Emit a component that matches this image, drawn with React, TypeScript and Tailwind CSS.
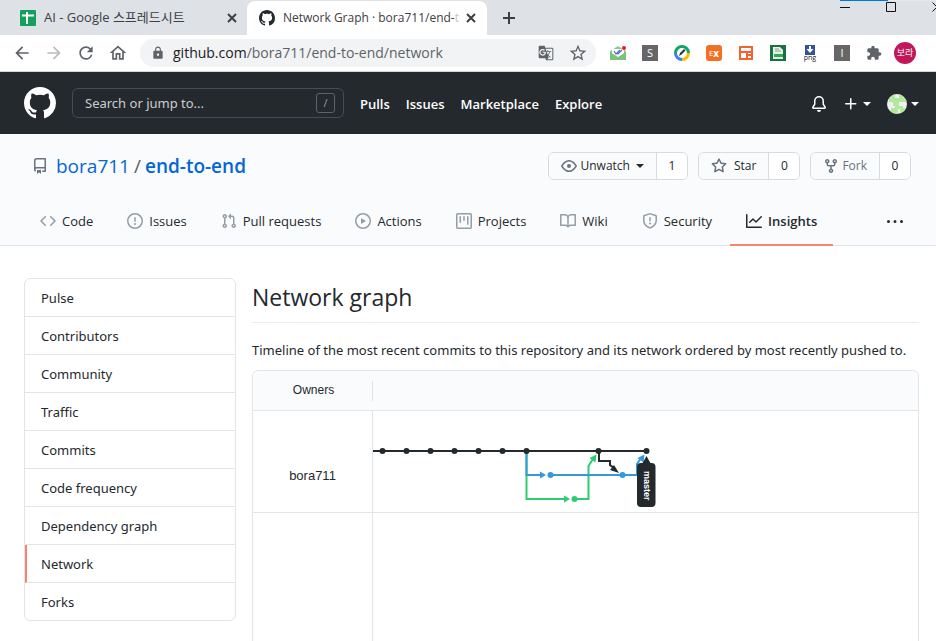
import React from "react";
import {
  MdArrowBack,
  MdArrowForward,
  MdRefresh,
  MdLock,
  MdStarBorder,
  MdGTranslate,
  MdExtension,
  MdOutlineHome,
} from "react-icons/md";

const icons = {
  mark: "M8 0C3.58 0 0 3.58 0 8c0 3.54 2.29 6.53 5.47 7.59.4.07.55-.17.55-.38 0-.19-.01-.82-.01-1.49-2.01.37-2.53-.49-2.69-.94-.09-.23-.48-.94-.82-1.13-.28-.15-.68-.52-.01-.53.63-.01 1.08.58 1.23.82.72 1.21 1.87.87 2.33.66.07-.52.28-.87.51-1.07-1.78-.2-3.64-.89-3.64-3.95 0-.87.31-1.59.82-2.15-.08-.2-.36-1.02.08-2.12 0 0 .67-.21 2.2.82.64-.18 1.32-.27 2-.27.68 0 1.36.09 2 .27 1.53-1.04 2.2-.82 2.2-.82.44 1.1.16 1.92.08 2.12.51.56.82 1.27.82 2.15 0 3.07-1.87 3.75-3.65 3.95.29.25.54.73.54 1.48 0 1.07-.01 1.93-.01 2.2 0 .21.15.46.55.38A8.013 8.013 0 0016 8c0-4.42-3.58-8-8-8z",
  repo: "M2 2.5A2.5 2.5 0 014.5 0h8.75a.75.75 0 01.75.75v12.5a.75.75 0 01-.75.75h-2.5a.75.75 0 110-1.5h1.75v-2h-8a1 1 0 00-.714 1.7.75.75 0 01-1.072 1.05A2.495 2.495 0 012 11.5v-9zm10.5-1V9h-8c-.356 0-.694.074-1 .208V2.5a1 1 0 011-1h8zM5 12.25v3.25a.25.25 0 00.4.2l1.45-1.087a.25.25 0 01.3 0L8.6 15.7a.25.25 0 00.4-.2v-3.25a.25.25 0 00-.25-.25h-3.5a.25.25 0 00-.25.25z",
  code: "M4.72 3.22a.75.75 0 011.06 1.06L2.06 8l3.72 3.72a.75.75 0 11-1.06 1.06L.47 8.53a.75.75 0 010-1.06l4.25-4.25zm6.56 0a.75.75 0 10-1.06 1.06L13.94 8l-3.72 3.72a.75.75 0 101.06 1.06l4.25-4.25a.75.75 0 000-1.06l-4.25-4.25z",
  issue: "M8 1.5a6.5 6.5 0 100 13 6.5 6.5 0 000-13zM0 8a8 8 0 1116 0A8 8 0 010 8zm9 3a1 1 0 11-2 0 1 1 0 012 0zm-.25-6.25a.75.75 0 00-1.5 0v3.5a.75.75 0 001.5 0v-3.5z",
  pull: "M7.177 3.073L9.573.677A.25.25 0 0110 .854v4.792a.25.25 0 01-.427.177L7.177 3.427a.25.25 0 010-.354zM3.75 2.5a.75.75 0 100 1.5.75.75 0 000-1.5zm-2.25.75a2.25 2.25 0 113 2.122v5.256a2.251 2.251 0 11-1.5 0V5.372A2.25 2.25 0 011.5 3.25zM11 2.5h-1V4h1a1 1 0 011 1v5.628a2.251 2.251 0 101.5 0V5A2.5 2.5 0 0011 2.5zm1 10.25a.75.75 0 111.5 0 .75.75 0 01-1.5 0zM3.75 12a.75.75 0 100 1.5.75.75 0 000-1.5z",
  play: "M1.5 8a6.5 6.5 0 1113 0 6.5 6.5 0 01-13 0zM8 0a8 8 0 100 16A8 8 0 008 0zM6.379 5.227A.25.25 0 006 5.442v5.117a.25.25 0 00.379.214l4.264-2.559a.25.25 0 000-.428L6.379 5.227z",
  project: "M1.75 0A1.75 1.75 0 000 1.75v12.5C0 15.216.784 16 1.75 16h12.5A1.75 1.75 0 0016 14.25V1.75A1.75 1.75 0 0014.25 0H1.75zM1.5 1.75a.25.25 0 01.25-.25h12.5a.25.25 0 01.25.25v12.5a.25.25 0 01-.25.25H1.75a.25.25 0 01-.25-.25V1.75zM11.75 3a.75.75 0 00-.75.75v7.5a.75.75 0 001.5 0v-7.5a.75.75 0 00-.75-.75zm-8.25.75a.75.75 0 011.5 0v5.5a.75.75 0 01-1.5 0v-5.5zM8 3a.75.75 0 00-.75.75v3.5a.75.75 0 001.5 0v-3.5A.75.75 0 008 3z",
  book: "M0 1.75A.75.75 0 01.75 1h4.253c1.227 0 2.317.59 3 1.501A3.744 3.744 0 0111.006 1h4.245a.75.75 0 01.75.75v10.5a.75.75 0 01-.75.75h-4.507a2.25 2.25 0 00-1.591.659l-.622.621a.75.75 0 01-1.06 0l-.622-.621A2.25 2.25 0 005.258 13H.75a.75.75 0 01-.75-.75V1.75zm8.755 3a2.25 2.25 0 012.25-2.25H14.5v9h-3.757c-.71 0-1.4.201-1.992.572l.004-7.322zm-1.504 7.324l.004-5.073-.002-2.253A2.25 2.25 0 005.003 2.5H1.5v9h3.757a3.75 3.75 0 011.994.574z",
  shield: "M7.467.133a1.75 1.75 0 011.066 0l5.25 1.68A1.75 1.75 0 0115 3.48V7c0 1.566-.32 3.182-1.303 4.682-.983 1.498-2.585 2.813-5.032 3.855a1.7 1.7 0 01-1.33 0c-2.447-1.042-4.049-2.357-5.032-3.855C1.32 10.182 1 8.566 1 7V3.48a1.75 1.75 0 011.217-1.667l5.25-1.68zm.61 1.429a.25.25 0 00-.153 0l-5.25 1.68a.25.25 0 00-.174.238V7c0 1.358.275 2.666 1.057 3.86.784 1.194 2.121 2.34 4.366 3.297a.2.2 0 00.154 0c2.245-.956 3.582-2.104 4.366-3.298C13.225 9.666 13.5 8.36 13.5 7V3.48a.25.25 0 00-.174-.237l-5.25-1.68zM9 10.5a1 1 0 11-2 0 1 1 0 012 0zm-.25-5.75a.75.75 0 10-1.5 0v3a.75.75 0 001.5 0v-3z",
  graph: "M1.5 1.75a.75.75 0 00-1.5 0v12.5c0 .414.336.75.75.75h14.5a.75.75 0 000-1.5H1.5V1.75zm14.28 2.53a.75.75 0 00-1.06-1.06L10 7.94 7.53 5.47a.75.75 0 00-1.06 0L3.22 8.72a.75.75 0 001.06 1.06L7 7.06l2.47 2.47a.75.75 0 001.06 0l5.25-5.25z",
  kebab: "M8 9a1.5 1.5 0 100-3 1.5 1.5 0 000 3zM1.5 9a1.5 1.5 0 100-3 1.5 1.5 0 000 3zm13 0a1.5 1.5 0 100-3 1.5 1.5 0 000 3z",
  eye: "M1.679 7.932c.412-.621 1.242-1.75 2.366-2.717C5.175 4.242 6.527 3.5 8 3.5c1.473 0 2.824.742 3.955 1.715 1.124.967 1.954 2.096 2.366 2.717a.119.119 0 010 .136c-.412.621-1.242 1.75-2.366 2.717C10.825 11.758 9.473 12.5 8 12.5c-1.473 0-2.824-.742-3.955-1.715C2.92 9.818 2.09 8.69 1.679 8.068a.119.119 0 010-.136zM8 2c-1.981 0-3.67.992-4.933 2.078C1.797 5.169.88 6.423.43 7.1a1.619 1.619 0 000 1.798c.45.678 1.367 1.932 2.637 3.024C4.329 13.008 6.019 14 8 14c1.981 0 3.67-.992 4.933-2.078 1.27-1.091 2.187-2.345 2.637-3.023a1.619 1.619 0 000-1.798c-.45-.678-1.367-1.932-2.637-3.023C11.671 2.992 9.981 2 8 2zm0 8a2 2 0 100-4 2 2 0 000 4z",
  star: "M8 .25a.75.75 0 01.673.418l1.882 3.815 4.21.612a.75.75 0 01.416 1.279l-3.046 2.97.719 4.192a.75.75 0 01-1.088.791L8 12.347l-3.766 1.98a.75.75 0 01-1.088-.79l.72-4.194L.818 6.374a.75.75 0 01.416-1.28l4.21-.611L7.327.668A.75.75 0 018 .25zm0 2.445L6.615 5.5a.75.75 0 01-.564.41l-3.097.45 2.24 2.184a.75.75 0 01.216.664l-.528 3.084 2.769-1.456a.75.75 0 01.698 0l2.77 1.456-.53-3.084a.75.75 0 01.216-.664l2.24-2.183-3.096-.45a.75.75 0 01-.564-.41L8 2.694v.001z",
  fork: "M5 3.25a.75.75 0 11-1.5 0 .75.75 0 011.5 0zm0 2.122a2.25 2.25 0 10-1.5 0v.878A2.25 2.25 0 005.75 8.5h1.5v2.128a2.251 2.251 0 101.5 0V8.5h1.5a2.25 2.25 0 002.25-2.25v-.878a2.25 2.25 0 10-1.5 0v.878a.75.75 0 01-.75.75h-4.5A.75.75 0 015 6.25v-.878zm3.75 7.378a.75.75 0 11-1.5 0 .75.75 0 011.5 0zm3-8.75a.75.75 0 100-1.5.75.75 0 000 1.5z",
  bell: "M8 16a2 2 0 001.985-1.75c.017-.137-.097-.25-.235-.25h-3.5c-.138 0-.252.113-.235.25A2 2 0 008 16zM8 1.5A3.5 3.5 0 004.5 5v2.947c0 .346-.102.683-.294.97l-1.703 2.556a.018.018 0 00-.003.01l.001.006c0 .002.002.004.004.006a.017.017 0 00.006.004l.007.001h10.964l.007-.001a.016.016 0 00.006-.004.016.016 0 00.004-.006l.001-.007a.017.017 0 00-.003-.01l-1.703-2.554a1.75 1.75 0 01-.294-.97V5A3.5 3.5 0 008 1.5zM3 5a5 5 0 0110 0v2.947c0 .05.015.098.042.139l1.703 2.555A1.518 1.518 0 0113.482 13H2.518a1.518 1.518 0 01-1.263-2.36l1.703-2.554A.25.25 0 003 7.947V5z",
  plus: "M7.75 2a.75.75 0 01.75.75V7h4.25a.75.75 0 110 1.5H8.5v4.25a.75.75 0 11-1.5 0V8.5H2.75a.75.75 0 010-1.5H7V2.75A.75.75 0 017.75 2z",
};

type IconName = keyof typeof icons;

function Octicon({ name, className = "size-4" }: { name: IconName; className?: string }) {
  return (
    <svg viewBox="0 0 16 16" className={`shrink-0 fill-current ${className}`} aria-hidden="true">
      <path fillRule="evenodd" d={icons[name]} />
    </svg>
  );
}

function Caret() {
  return (
    <svg viewBox="0 0 8 4" className="h-1 w-2 shrink-0 fill-current" aria-hidden="true">
      <path d="M0 0h8L4 4z" />
    </svg>
  );
}

function Cross() {
  return (
    <svg viewBox="0 0 10 10" className="size-[10px] shrink-0" aria-hidden="true">
      <path d="M1 1l8 8M9 1L1 9" stroke="#3c4043" strokeWidth="2" />
    </svg>
  );
}

function TabStrip() {
  return (
    <div className="flex h-[35px] bg-[#dee1e6] text-xs text-[#3c4043]">
      <div className="flex w-[247px] shrink-0 items-center pr-[10px] pl-5">
        <svg viewBox="0 0 16 16" className="mr-2 size-4 shrink-0" aria-hidden="true">
          <rect width="16" height="16" rx="1" fill="#12a05c" />
          <path d="M2 5.5h12M7 2v12" stroke="#fff" strokeWidth="2" />
        </svg>
        <span className="flex-1 truncate text-[13px]">AI - Google 스프레드시트</span>
        <button type="button" aria-label="Close tab"><Cross /></button>
      </div>
      <div className="mt-px flex w-[240px] shrink-0 items-center rounded-t-lg bg-white pr-[11px] pl-3">
        <Octicon name="mark" className="mr-2 size-4 text-[#24292e]" />
        <span className="flex-1 whitespace-nowrap">
          Network Graph · bora711/end-<span className="text-[#c4c6c8]">t</span>
        </span>
        <button type="button" aria-label="Close tab"><Cross /></button>
      </div>
      <button type="button" aria-label="New tab" className="ml-4 flex items-center">
        <svg viewBox="0 0 12 12" className="size-3" aria-hidden="true">
          <path d="M6 0v12M0 6h12" stroke="#3c4043" strokeWidth="2" />
        </svg>
      </button>
      <svg viewBox="0 0 96 14" className="ml-auto h-[14px] w-24 shrink-0" aria-hidden="true">
        <path d="M48 0h48v1H48z" fill="#e8e6e6" />
        <path d="M0 0h48v1H0z" fill="#0078d7" />
        <path d="M0 7.500h10M46.500 2.500h9v9h-9zM92.500 2.500l9 9M101.500 2.500l-9 9" fill="none" stroke="#111" />
      </svg>
    </div>
  );
}

function Extensions() {
  return (
    <div className="flex items-center gap-4">
      <svg viewBox="0 0 16 16" className="size-4" aria-hidden="true">
        <path d="M0 6l8-5 8 5v9H0z" fill="#8ccb88" />
        <path d="M2 4h12v5l-6 4-6-4z" fill="#fff" />
        <path d="M0 7l8 5 8-5v8H0z" fill="#79c47b" />
        <path d="M4 6l2 3 4-4M7 8l1 1 4-4" fill="none" stroke="#6468c8" strokeWidth="1.200" />
        <circle cx="14" cy="3" r="2" fill="#f0143c" />
      </svg>
      <span className="flex size-4 items-center justify-center bg-[#666] text-[11px] leading-4 text-white">S</span>
      <svg viewBox="0 0 16 16" className="size-4" aria-hidden="true">
        <circle cx="8" cy="8" r="6.500" fill="#fff" />
        <path d="M1.500 8A6.500 6.500 0 018 1.500 6.500 6.500 0 0114.500 8" fill="none" stroke="#13a566" strokeWidth="3" />
        <path d="M14.500 8A6.500 6.500 0 018 14.500" fill="none" stroke="#fbbc05" strokeWidth="3" />
        <path d="M8 14.500A6.500 6.500 0 011.500 8" fill="none" stroke="#3b82f6" strokeWidth="3" />
        <path d="M5 11l1-3 4-4 1.500 1.500-4 4z" fill="#333" />
      </svg>
      <span className="flex size-4 items-center justify-center rounded-[3px] bg-[#f36f24] text-[10px] leading-4 font-bold text-white">
        <span className="text-[8px] font-normal">E</span>x
      </span>
      <svg viewBox="0 0 16 16" className="size-4" aria-hidden="true">
        <path d="M1 1h14v14H1zM3 3v3h10V3zM3 8v5h5V8zM10 8v1h3V8zM10 11v2h3v-2z" fill="#f4632f" fillRule="evenodd" />
      </svg>
      <svg viewBox="0 0 16 16" className="size-4" aria-hidden="true">
        <path d="M0 0h16v16H0z" fill="#18713f" />
        <path d="M3 2h7l3 3v9H3z" fill="#e6f3e9" />
        <path d="M4 9h9v3H4z" fill="#36a852" />
        <path d="M5 4h4M5 6h6" stroke="#7aa98a" />
      </svg>
      <span className="flex size-4 flex-col items-center">
        <svg viewBox="0 0 10 10" className="size-[10px] shrink-0" aria-hidden="true">
          <path d="M0 0h10v10H0z" fill="#34529b" />
          <path d="M4 1h2v3h2.500L5 8 1.500 4H4z" fill="#fff" />
        </svg>
        <span className="text-[7px] leading-[6px] text-[#222]">png</span>
      </span>
      <span className="flex size-4 items-center justify-center bg-[#666] text-[11px] leading-4 text-white">I</span>
      <MdExtension className="size-4 text-[#5f6368]" />
    </div>
  );
}

function Toolbar() {
  return (
    <div className="flex h-[37px] items-center border-b border-[#d5d6d8] bg-white pr-5 pl-3 text-[#5f6368]">
      <div className="flex shrink-0 gap-3">
        <button type="button" aria-label="Back"><MdArrowBack className="size-5" /></button>
        <button type="button" aria-label="Forward"><MdArrowForward className="size-5 text-[#babcbe]" /></button>
        <button type="button" aria-label="Reload"><MdRefresh className="size-5" /></button>
        <button type="button" aria-label="Home"><MdOutlineHome className="size-5" /></button>
      </div>
      <div className="mr-[14px] ml-3 flex h-7 min-w-0 flex-1 items-center rounded-full bg-[#f1f3f4] pr-2 pl-[11px]">
        <MdLock className="mr-2 size-[14px] shrink-0" />
        <p className="flex-1 truncate text-sm">
          <span className="text-[#202124]">github.com</span>/bora711/end-to-end/network
        </p>
        <MdGTranslate className="mr-[14px] size-4 shrink-0" />
        <MdStarBorder className="size-5 shrink-0" />
      </div>
      <Extensions />
      <span className="ml-3 flex size-[22px] shrink-0 items-center justify-center rounded-full bg-[#c2185b] text-[9px] text-white">
        보라
      </span>
    </div>
  );
}

function SiteHeader() {
  return (
    <header className="flex h-[62px] items-center bg-[#24292e] pr-[17px] pl-6 text-white">
      <a href="#home" aria-label="Homepage"><Octicon name="mark" className="size-8" /></a>
      <div className="ml-4 flex h-[30px] w-[272px] items-center rounded-md border border-[#444d56] pr-2 pl-3">
        <input
          aria-label="Search or jump to"
          placeholder="Search or jump to..."
          className="min-w-0 flex-1 bg-transparent pt-0.5 font-['Noto_Sans',sans-serif] text-[13px] placeholder-[#cccdcf] outline-none"
        />
        <kbd className="flex h-5 w-[19px] items-center justify-center rounded-[3px] border border-[#5b636b] font-[inherit] text-[11px] text-[#959da5]">
          /
        </kbd>
      </div>
      <nav className="ml-4 flex gap-4 pt-[3px] text-[13px] font-semibold">
        <a href="#pulls">Pulls</a>
        <a href="#issues">Issues</a>
        <a href="#marketplace">Marketplace</a>
        <a href="#explore">Explore</a>
      </nav>
      <div className="ml-auto flex items-center pt-0.5">
        <button type="button" aria-label="Notifications"><Octicon name="bell" /></button>
        <button type="button" aria-label="Create new" className="ml-4 flex items-center gap-1">
          <Octicon name="plus" />
          <Caret />
        </button>
        <button type="button" aria-label="Account" className="ml-4 flex items-center gap-1">
          <svg viewBox="0 0 20 20" className="size-5 rounded-full" aria-hidden="true">
            <path d="M0 0h20v20H0z" fill="#f0f0f0" />
            <path d="M4 0h4v4h4V0h4v4h4v4h-8v4h4v2h4v6h-7v-5h-2v5H4v-6h4v-2H6v-4H2V4h2z" fill="#b2e89b" />
          </svg>
          <Caret />
        </button>
      </div>
    </header>
  );
}

function CountButton({ icon, label, count, caret, muted }: {
  icon: IconName; label: string; count: string; caret?: boolean; muted?: boolean;
}) {
  return (
    <div className="flex h-7 overflow-hidden rounded-md border border-[#d8dadd] text-xs">
      <button
        type="button"
        className={`flex items-center bg-[#fafbfc] px-3 font-medium ${muted ? "text-[#6a737d]" : "text-[#24292e]"}`}
      >
        <Octicon name={icon} className={`size-4 text-[#6a737d] ${caret || muted ? "mr-[3px]" : "mr-[7px]"}`} />
        {label}
        {caret && <span className="ml-[6px]"><Caret /></span>}
      </button>
      <a href={`#${label}`} className="flex w-[31px] items-center justify-center border-l border-[#d8dadd] bg-white font-medium text-[#24292e]">
        {count}
      </a>
    </div>
  );
}

const repoTabs: { icon: IconName; label: string }[] = [
  { icon: "code", label: "Code" },
  { icon: "issue", label: "Issues" },
  { icon: "pull", label: "Pull requests" },
  { icon: "play", label: "Actions" },
  { icon: "project", label: "Projects" },
  { icon: "book", label: "Wiki" },
  { icon: "shield", label: "Security" },
  { icon: "graph", label: "Insights" },
];

function RepoHeader() {
  return (
    <div className="border-b border-[#e1e4e8] bg-[#fafbfc] pt-[18px] pl-6">
      <div className="flex h-7 items-center justify-between pr-[25px] pl-2">
        <h1 className="flex items-center text-[19px] text-[#0366d6]">
          <Octicon name="repo" className="mr-2 size-4 text-[#6a737d]" />
          <a href="#owner">bora711</a>
          <span className="mx-1 text-[#586069]">/</span>
          <a href="#repo" className="font-semibold">end-to-end</a>
        </h1>
        <div className="flex gap-[10px]">
          <CountButton icon="eye" label="Unwatch" count="1" caret />
          <CountButton icon="star" label="Star" count="0" />
          <CountButton icon="fork" label="Fork" count="0" muted />
        </div>
      </div>
      <nav className="mt-4 -mb-px flex h-[50px] items-center gap-0.5 pr-[33px] text-[13px] text-[#24292e]">
        {repoTabs.map(({ icon, label }) => {
          const active = label === "Insights";
          return (
            <a
              key={label}
              href={`#${label}`}
              className={`flex h-full items-center gap-[6px] border-b-2 px-4 pt-0.5 whitespace-nowrap ${active ? "border-[#f9826c] font-semibold" : "border-transparent"}`}
            >
              <Octicon name={icon} className={active ? "size-4 text-[#24292e]" : "size-4 text-[#959da5]"} />
              <span className="pt-0.5">{label}</span>
            </a>
          );
        })}
        <button type="button" aria-label="More" className="ml-auto pt-0.5"><Octicon name="kebab" /></button>
      </nav>
    </div>
  );
}

const menu = ["Pulse", "Contributors", "Community", "Traffic", "Commits", "Code frequency", "Dependency graph", "Network", "Forks"];

function Sidebar() {
  return (
    <nav className="w-[212px] shrink-0 self-start overflow-hidden rounded-md border border-[#e1e4e8]">
      {menu.map((item) => (
        <a
          key={item}
          href={`#${item}`}
          className={`flex h-[38px] items-center border-b border-[#e1e4e8] pt-0.5 text-[13px] last:h-[37px] last:border-b-0 ${item === "Network" ? "border-l-2 border-l-[#f9826c] pl-[14px]" : "pl-4"}`}
        >
          {item}
        </a>
      ))}
    </nav>
  );
}

const commits = [9.5, 33.5, 57.5, 81.5, 105.5, 129.5, 153.5, 225.5, 273.5];

function CommitGraph() {
  return (
    <svg viewBox="0 0 290 101" className="h-[101px] w-[290px]" role="img" aria-label="Commit graph">
      <g fill="none" strokeWidth="2">
        <path d="M153.500 40v48h39M202 88h13.500V55l5-8" stroke="#2ecc71" />
        <path d="M153.500 40v24h15M178 64h86V53l4-6" stroke="#3498db" />
        <path d="M0 40h273M226 40v10h11v4l5 4" stroke="#24292e" />
      </g>
      <path d="M191 84.500l6 3.500-6 3.500zM223.500 43.500l-7 3.500 6 4.500z" fill="#2ecc71" />
      <path d="M167 60.500l6 3.500-6 3.500zM271.500 43.500l-7 3.500 6 4.500z" fill="#3498db" />
      <path d="M246 62l-9-3 4-5z" fill="#24292e" />
      <circle cx="177.500" cy="64" r="3" fill="#3498db" />
      <circle cx="249.500" cy="64" r="3" fill="#3498db" />
      <circle cx="201.500" cy="88" r="3" fill="#2ecc71" />
      {commits.map((x) => <circle key={x} cx={x} cy="40" r="3" fill="#24292e" />)}
      <rect x="264" y="52" width="18.500" height="44" rx="4" fill="#24292e" />
      <path d="M273.500 45l4.500 8h-9z" fill="#24292e" />
      <text transform="translate(271 60) rotate(90)" fill="#fff" className="font-['Liberation_Sans',sans-serif] text-[9px] font-bold">
        master
      </text>
    </svg>
  );
}

export default function App() {
  return (
    <div className="flex h-screen flex-col overflow-hidden bg-white font-['Open_Sans','Noto_Sans_CJK_KR',sans-serif] text-[#24292e]">
      <TabStrip />
      <Toolbar />
      <SiteHeader />
      <RepoHeader />
      <main className="flex min-h-0 flex-1 gap-4 pt-8 pr-[17px] pl-6 font-['Noto_Sans',sans-serif]">
        <Sidebar />
        <div className="flex min-w-0 flex-1 flex-col">
          <h2 className="border-b border-[#eaecef] pt-[3px] pb-[9px] font-['Open_Sans',sans-serif] text-[23px] leading-8">
            Network graph
          </h2>
          <p className="mt-4 mb-[9px] text-[13px] leading-[22px] whitespace-nowrap">
            Timeline of the most recent commits to this repository and its network ordered by most recently pushed to.
          </p>
          <section className="flex flex-1 flex-col overflow-hidden rounded-t-md border border-b-0 border-[#e1e4e8] font-['Liberation_Sans',sans-serif]">
            <div className="flex h-10 shrink-0 items-center border-b border-[#e1e4e8] bg-[#fafbfc]">
              <div className="flex h-5 w-[120px] items-center justify-center border-r border-[#e1e4e8] pb-0.5 pl-0.5 text-xs">Owners</div>
            </div>
            <div className="flex h-[102px] shrink-0 border-b border-[#e1e4e8]">
              <div className="flex w-[120px] items-center justify-center border-r border-[#e1e4e8] pt-7 text-[13px]">bora711</div>
              <CommitGraph />
            </div>
            <div className="w-[120px] flex-1 border-r border-[#e1e4e8]" />
          </section>
        </div>
      </main>
    </div>
  );
}
